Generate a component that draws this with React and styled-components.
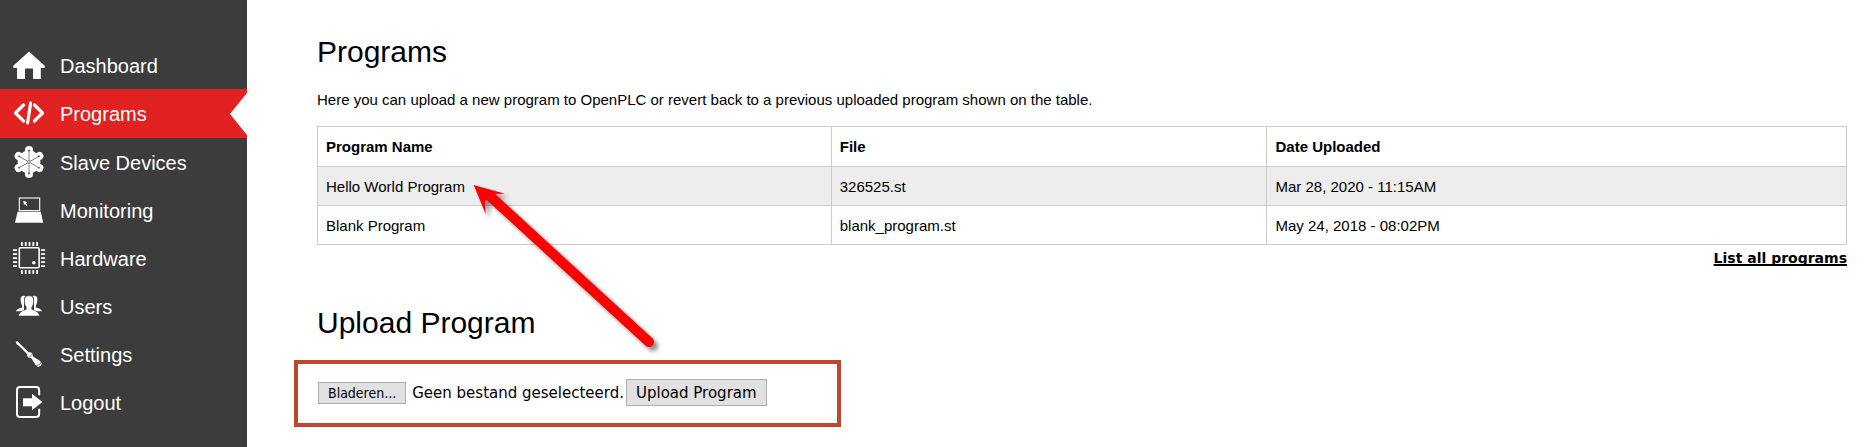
import React, { useRef } from 'react';
import styled, { createGlobalStyle } from 'styled-components';

const GlobalStyle = createGlobalStyle`
  * {
    box-sizing: border-box;
  }

  body {
    margin: 0;
    background: #fff;
    color: #000;
    font-family: "Liberation Sans", Arial, sans-serif;
  }
`;

const Page = styled.div`
  position: relative;
  display: flex;
  min-height: 100vh;
`;

const Sidebar = styled.nav`
  flex: 0 0 247px;
  padding-top: 41px;
  background: #3c3c3c;
`;

const NavItem = styled.a`
  position: relative;
  display: flex;
  align-items: center;
  gap: 15px;
  height: ${({ $active }) => ($active ? 49 : 48)}px;
  padding-left: 13px;
  background: ${({ $active }) => ($active ? '#e02222' : 'transparent')};
  color: #fff;
  font-size: 20px;
  text-decoration: none;
`;

const NavIcon = styled.svg`
  width: 32px;
  height: 32px;
  fill: #fff;
`;

const NavLabel = styled.span`
  padding-top: 2px;
`;

const Notch = styled.span`
  position: absolute;
  right: 0;
  top: 4px;
  border: solid transparent;
  border-width: 21px 17px 21px 0;
  border-right-color: #fff;
`;

const Main = styled.main`
  flex: 1;
  min-width: 0;
  padding: 34px 25px 20px 70px;
`;

const Title = styled.h2`
  margin: 0;
  font-size: 30px;
  font-weight: 400;
  line-height: 36px;
`;

const Intro = styled.p`
  margin: 20px 0 16px;
  font-size: 15px;
  line-height: 20px;
`;

const ProgramTable = styled.table`
  width: 100%;
  border-collapse: collapse;
  table-layout: fixed;
  font-size: 15px;
`;

const HeadCell = styled.th`
  width: ${({ $width }) => $width};
  height: 40px;
  padding: 0 8px;
  border: 1px solid #ccc;
  text-align: left;
`;

const Row = styled.tr`
  background: ${({ $shaded }) => ($shaded ? '#ededed' : '#fff')};
`;

const Cell = styled.td`
  height: 39px;
  padding: 0 8px;
  border: 1px solid #ccc;
`;

const ListLink = styled.a`
  display: block;
  width: fit-content;
  margin: 3px 0 37px auto;
  color: #000;
  font-family: Verdana, "DejaVu Sans", sans-serif;
  font-size: 14px;
  font-weight: 700;
  line-height: 20px;
  text-decoration: underline;
  text-decoration-thickness: 2px;
  text-decoration-skip-ink: none;
`;

const UploadForm = styled.form`
  display: flex;
  align-items: center;
  width: 547px;
  max-width: 100%;
  margin: 19px 0 0 -23px;
  padding: 15px 20px 17px;
  border: 4px solid #bf4730;
`;

const FileInput = styled.input`
  display: none;
`;

const FileLabel = styled.label`
  margin: 0 2px 0 6px;
  font-family: Verdana, "DejaVu Sans", sans-serif;
  font-size: 15px;
  line-height: 18px;
`;

const FormButton = styled.button`
  height: ${({ $small }) => ($small ? 22 : 27)}px;
  padding: 0 9px;
  border: 1px solid #adadad;
  background: #e1e1e1;
  color: #000;
  font-family: ${({ $small }) => ($small
    ? 'Tahoma, "DejaVu Sans Condensed", sans-serif'
    : 'Verdana, "DejaVu Sans", sans-serif')};
  font-size: ${({ $small }) => ($small ? 14 : 15)}px;
  line-height: 18px;
`;

/* Annotation that floats over the table and the upload section */
const Arrow = styled.svg`
  position: absolute;
  left: 465px;
  top: 175px;
  width: 205px;
  height: 185px;
  pointer-events: none;
  filter: drop-shadow(4px 4px 2px rgba(0, 0, 0, 0.45));
`;

const icons = {
  home: (
    <path d="M16 2.5 31.4 16.6Q32.6 18 31 19H27.8V30H20V19.5H12V30H4V19H1Q-.6 18 .6 16.6Z" />
  ),
  code: (
    <g fill="none" stroke="#fff" strokeWidth="3.2" strokeLinecap="round" strokeLinejoin="round">
      <path d="M10.5 7 2.5 15 10.5 23M21.5 7 29.5 15 21.5 23" />
      <path d="M17.6 5.2 14.6 25" />
    </g>
  ),
  slave: (
    <>
      <circle cx="16" cy="16" r="11.4" />
      {[0, 60, 120, 180, 240, 300].map((deg) => (
        <g key={deg} transform={`rotate(${deg} 16 16)`}>
          <circle cx="16" cy="4" r="4" />
          <path d="M16 4.5V16" stroke="#666" strokeWidth="0.8" />
          <circle cx="16" cy="4.6" r="0.9" fill="#444" />
        </g>
      ))}
      <circle cx="16" cy="16" r="1.5" fill="#ccc" stroke="#777" strokeWidth="0.6" />
    </>
  ),
  monitor: (
    <>
      <rect x="6.3" y="4" width="20.4" height="12.6" fill="none" stroke="#fff" strokeWidth="1.1" />
      <path d="M4.6 17.8H27.8L30.2 28.8H2Z" />
      <path d="M10.3 6.8 14.3 8.2 13 9.2 14.6 11.2 13.4 12 12 10 11 11Z" />
    </>
  ),
  chip: (
    <>
      <rect x="6.3" y="5.8" width="19.8" height="20" rx="1" fill="none" stroke="#fff" strokeWidth="1.6" />
      <circle cx="20.8" cy="20.8" r="1.8" />
      {[0, 1, 2, 3, 4].map((n) => (
        <path
          key={n}
          d={`M${8 + n * 3.8} 0h1.8v4h-1.8ZM${8 + n * 3.8} 28h1.8v4h-1.8ZM0 ${7.3 + n * 4}h4v1.7h-4ZM28 ${7.3 + n * 4}h4v1.7h-4Z`}
        />
      ))}
    </>
  ),
  users: (
    <>
      <path d="M12.5 6Q7.3 5 7.6 10Q7.7 14 9.2 15.8V17.5Q3 19 3 21.2H11V8Z" />
      <path d="M19.5 6Q24.7 5 24.4 10Q24.3 14 22.8 15.8V17.5Q29 19 29 21.2H21V8Z" />
      <path
        d="M16 5.8Q11.2 5.8 11.4 11Q11.6 15.2 13.2 17V19.4Q5.6 21.6 5.6 26H26.4Q26.4 21.6 18.8 19.4V17Q20.4 15.2 20.6 11Q20.8 5.8 16 5.8Z"
        stroke="#3c3c3c"
        strokeWidth="0.5"
      />
    </>
  ),
  screwdriver: (
    <>
      <path d="M2.7 3.6 4.5 3.1 7.3 6.3 16 14.5 17.3 14 19.4 15.8 20 18.6 26.5 22.5 29.2 25.4Q28 28 25 29L22.3 26.6 18.3 20.3 15.4 19.6 13.8 17.5 14.3 16.3 5.8 7.8 3.4 6Z" />
      <path d="M28 24.2Q27.3 27 24 27.6M16.2 19.3 19.2 16.3" fill="none" stroke="#3c3c3c" strokeWidth="0.7" />
    </>
  ),
  logout: (
    <>
      <path
        d="M26.2 9.3V4.4Q26.2 1 23 1H7Q4 1 4 4V28Q4 31 7 31H23Q26.2 31 26.2 27.8V22.7"
        fill="none"
        stroke="#fff"
        strokeWidth="2"
      />
      <path d="M10 12.3H19V7.8L29.4 16 19 24.3V20.2H10Z" />
    </>
  ),
};

const navItems = [
  { label: 'Dashboard', icon: 'home' },
  { label: 'Programs', icon: 'code', active: true },
  { label: 'Slave Devices', icon: 'slave' },
  { label: 'Monitoring', icon: 'monitor' },
  { label: 'Hardware', icon: 'chip' },
  { label: 'Users', icon: 'users' },
  { label: 'Settings', icon: 'screwdriver' },
  { label: 'Logout', icon: 'logout' },
];

const programs = [
  { name: 'Hello World Program', file: '326525.st', date: 'Mar 28, 2020 - 11:15AM' },
  { name: 'Blank Program', file: 'blank_program.st', date: 'May 24, 2018 - 08:02PM' },
];

export default function App() {
  const fileInput = useRef(null);

  return (
    <Page>
      <GlobalStyle />
      <Sidebar>
        {navItems.map(({ label, icon, active }) => (
          <NavItem key={label} href="#" $active={active}>
            <NavIcon viewBox="0 0 32 32" aria-hidden="true">{icons[icon]}</NavIcon>
            <NavLabel>{label}</NavLabel>
            {active && <Notch />}
          </NavItem>
        ))}
      </Sidebar>
      <Main>
        <Title>Programs</Title>
        <Intro>
          Here you can upload a new program to OpenPLC or revert back to a previous uploaded program shown on the table.
        </Intro>
        <ProgramTable>
          <thead>
            <Row>
              <HeadCell $width="33.6%">Program Name</HeadCell>
              <HeadCell $width="28.5%">File</HeadCell>
              <HeadCell $width="37.9%">Date Uploaded</HeadCell>
            </Row>
          </thead>
          <tbody>
            {programs.map(({ name, file, date }, index) => (
              <Row key={file} $shaded={index % 2 === 0}>
                <Cell>{name}</Cell>
                <Cell>{file}</Cell>
                <Cell>{date}</Cell>
              </Row>
            ))}
          </tbody>
        </ProgramTable>
        <ListLink href="#">List all programs</ListLink>
        <Title>Upload Program</Title>
        <UploadForm onSubmit={(event) => event.preventDefault()}>
          <FileInput id="program-file" type="file" ref={fileInput} />
          <FormButton type="button" $small onClick={() => fileInput.current.click()}>
            Bladeren...
          </FormButton>
          <FileLabel htmlFor="program-file">Geen bestand geselecteerd.</FileLabel>
          <FormButton type="submit">Upload Program</FormButton>
        </UploadForm>
      </Main>
      <Arrow viewBox="0 0 205 185" aria-hidden="true">
        <path d="M26 22 184 167" stroke="#f00" strokeWidth="10" strokeLinecap="round" />
        <path d="M8.7 10 40 18.7 26.5 19 20 26.5 20.7 39.3Z" fill="#f00" />
      </Arrow>
    </Page>
  );
}
